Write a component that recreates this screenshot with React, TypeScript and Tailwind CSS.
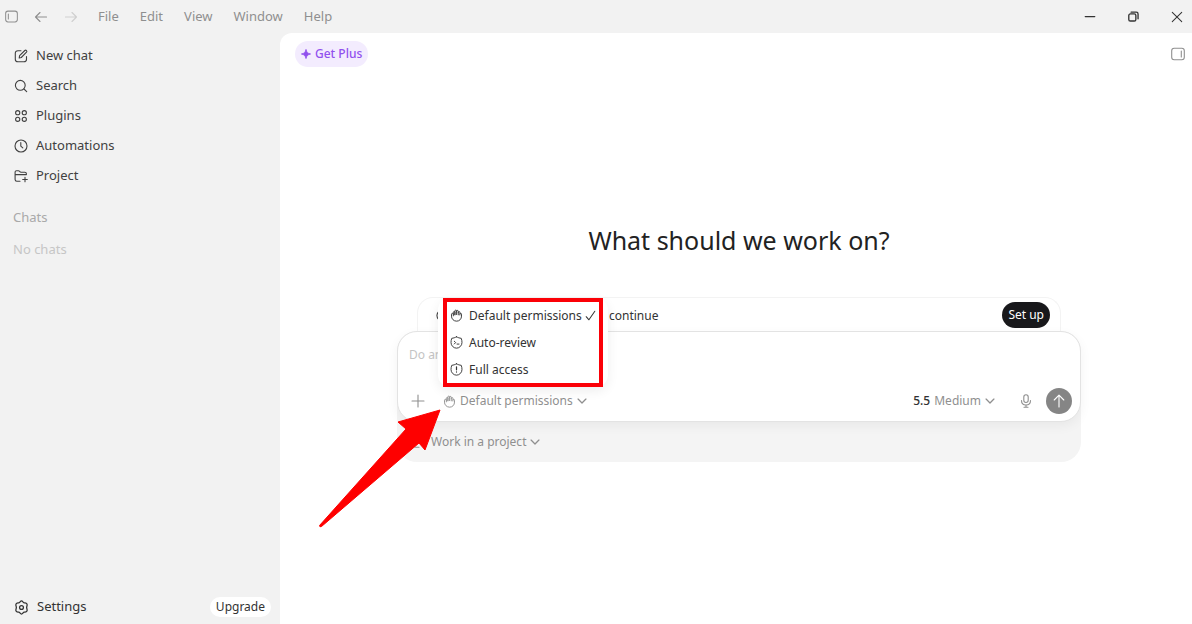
import type { ReactNode } from "react";

interface IconProps {
    size?: number;
    stroke?: number;
    className?: string;
    children?: ReactNode;
}

const Icon = ({ size = 14, stroke = 1.1, className = "", children }: IconProps) => (
    <svg width={size} height={size} viewBox="0 0 14 14" fill="none" stroke="currentColor" strokeWidth={stroke} strokeLinecap="round" strokeLinejoin="round" className={`shrink-0 ${className}`} aria-hidden="true">
        {children}
    </svg>
);

const HandIcon = () => (
    <Icon size={13} stroke={1}>
        <path d="M3.6 7.4V3.500c0-1 1.700-1 1.700 0v2.900M5.300 6V2c0-1.100 1.800-1.100 1.800 0v4M7.100 2.300c0-1.100 1.800-1.100 1.800 0v4M8.900 3.500c0-1 1.800-1 1.800 0v3" />
        <path d="M10.700 5.300c.2-1 1.700-.9 1.700.3v2c0 3.300-2.300 5.500-5.300 5.500-3.200 0-5.500-2.500-5.500-5.400V5.600c0-1.200 2-1.200 2 0" />
    </Icon>
);

const ReviewIcon = () => (
    <Icon size={13} stroke={1}>
        <path d="M7 .9c1.800 1 3.300 1.300 5.100 1.600.6 1.500.8 3.200.8 4.600 0 3.200-2.700 6-5.900 6s-5.900-2.800-5.900-6c0-1.400.2-3.100.8-4.600C3.700 2.200 5.200 1.900 7 .9Z" />
        <path d="m4.600 5.600 1.500 1.500-1.500 1.500M7.600 8.700h2.100" />
    </Icon>
);

const AccessIcon = () => (
    <Icon size={13} stroke={1}>
        <path d="M7 .9c1.800 1 3.300 1.300 5.100 1.600.6 1.500.8 3.200.8 4.600 0 3.200-2.700 6-5.900 6s-5.900-2.800-5.900-6c0-1.400.2-3.100.8-4.600C3.700 2.200 5.200 1.900 7 .9Z" />
        <path d="M7 4.100v3.300M7 9.600v.2" strokeWidth="1.300" />
    </Icon>
);

const ChevronIcon = () => (
    <Icon size={10} stroke={1.8}>
        <path d="m1.500 4.300 5.500 5.500 5.500-5.500" />
    </Icon>
);

const FolderIcon = () => (
    <Icon>
        <path d="M6 12.200H2.800c-1 0-1.700-.7-1.700-1.700V3.200c0-.9.6-1.400 1.400-1.400h1.900c.8 0 1 .3 1.400.8.3.4.7.6 1.300.6h3.700c1 0 1.600.6 1.600 1.500v.9H1.200M11 8.200v4.600M8.700 10.500h4.600" />
    </Icon>
);

const navItems = [
    {
        label: "New chat",
        icon: (
            <Icon>
                <path d="M7 1.700H4C2.400 1.700 1.300 2.700 1.300 4.300v5.900c0 1.600 1 2.600 2.600 2.600h6c1.600 0 2.600-1 2.600-2.600V7.500" />
                <path d="m5.200 9 .4-2.300 5.200-5.200c1.200-1 2.700.5 1.700 1.700L7.300 8.500 5.200 9Z" />
            </Icon>
        ),
    },
    {
        label: "Search",
        icon: (
            <Icon>
                <circle cx="6.300" cy="6.300" r="4.900" />
                <path d="m10 10 2.700 2.700" />
            </Icon>
        ),
    },
    {
        label: "Plugins",
        icon: (
            <Icon>
                <circle cx="3.700" cy="3.700" r="2.100" />
                <circle cx="10.300" cy="3.700" r="2.100" />
                <circle cx="3.700" cy="10.300" r="2.100" />
                <circle cx="10.300" cy="10.300" r="2.100" />
            </Icon>
        ),
    },
    {
        label: "Automations",
        icon: (
            <Icon>
                <circle cx="7" cy="7" r="6" />
                <path d="M6.800 3.600v3.500l2 1.800" />
            </Icon>
        ),
    },
    { label: "Project", icon: <FolderIcon /> },
];

const permissions = [
    { label: "Default permissions", icon: <HandIcon />, checked: true },
    { label: "Auto-review", icon: <ReviewIcon />, checked: false },
    { label: "Full access", icon: <AccessIcon />, checked: false },
];

const TitleBar = () => (
    <header className="flex h-[33px] shrink-0 items-center justify-between pl-[5px] pr-[9px] text-[#8f8f8f]">
        <div className="flex items-center">
            <button aria-label="Toggle sidebar">
                <Icon size={13}>
                    <rect x="0.700" y="1.200" width="12.600" height="11.600" rx="2.500" />
                    <path d="M3.600 4.300v5.400" />
                </Icon>
            </button>
            <button aria-label="Back" className="ml-4">
                <Icon>
                    <path d="M12.500 7H1.500M6 2.500 1.500 7 6 11.500" />
                </Icon>
            </button>
            <button aria-label="Forward" className="ml-4 text-[#cfcfcf]">
                <Icon>
                    <path d="M1.500 7h11M8 2.500 12.500 7 8 11.500" />
                </Icon>
            </button>
            <nav className="ml-5 flex gap-[21px] text-[13px]">
                <button>File</button>
                <button>Edit</button>
                <button>View</button>
                <button>Window</button>
                <button>Help</button>
            </nav>
        </div>
        <div className="flex items-center gap-8 text-[#333]">
            <button aria-label="Minimize">
                <Icon size={12} stroke={1.6}>
                    <path d="M1.500 6.500h11" />
                </Icon>
            </button>
            <button aria-label="Restore">
                <Icon size={11} stroke={1.7}>
                    <rect x="1" y="3.700" width="9" height="9" rx="2" />
                    <path d="M4 1.500h6.500c1.500 0 2.300.9 2.300 2.300V10" />
                </Icon>
            </button>
            <button aria-label="Close">
                <Icon size={12} stroke={1.200}>
                    <path d="m1.500 1.500 11 11M12.500 1.500l-11 11" />
                </Icon>
            </button>
        </div>
    </header>
);

const Sidebar = () => (
    <aside className="flex w-[280px] shrink-0 flex-col justify-between text-[13px] text-[#414141]">
        <div>
            <nav className="flex flex-col pt-2">
                {navItems.map((item) => (
                    <button key={item.label} className="flex h-[30px] items-center gap-2 pl-3.5 text-left">
                        {item.icon}
                        {item.label}
                    </button>
                ))}
            </nav>
            <h2 className="mt-4 pl-[13px] leading-5 text-[#a9a9a9]">Chats</h2>
            <p className="mt-3 pl-[13px] leading-5 text-[#c6c6c6]">No chats</p>
        </div>
        <div className="flex items-center justify-between pb-[7px] pl-3.5 pr-[9px]">
            <button className="flex items-center gap-2 text-[#333]">
                <Icon size={15} stroke={1.200}>
                    <path d="M9.400 2.600C8.400 2.400 8.100.9 7 .9S5.600 2.400 4.600 2.600C3.600 2.900 2.500 2.600 1.900 3.800 1.300 5 2.200 5.800 2.200 7c0 1.200-.9 2-.3 3.200.6 1.200 1.700.9 2.700 1.200 1 .2 1.300 1.700 2.400 1.700s1.400-1.500 2.400-1.700c1-.3 2.100 0 2.700-1.200.6-1.200-.3-2-.3-3.200 0-1.200.9-2 .3-3.200-.6-1.200-1.700-.9-2.700-1.200Z" />
                    <circle cx="7" cy="7" r="1.800" />
                </Icon>
                Settings
            </button>
            <button className="rounded-full bg-white px-1.5 text-[12px] leading-5 text-[#333]">Upgrade</button>
        </div>
    </aside>
);

const PermissionMenu = () => (
    <div className="absolute -top-[33px] left-[41px] z-10 rounded-xl bg-white px-[5px] shadow-[0_4px_12px_rgba(0,0,0,0.07)]">
        <ul role="menu" className="w-40 border-4 border-[#fb0007]">
            {permissions.map((item) => (
                <li key={item.label} role="none">
                    <button role="menuitemradio" aria-checked={item.checked} className="flex h-[27px] w-full items-center px-[3px] text-left text-[#333]">
                        {item.icon}
                        <span className="ml-1.5 flex-1 whitespace-nowrap">{item.label}</span>
                        {item.checked && (
                            <Icon size={11} stroke={1.300}>
                                <path d="m1.500 8.500 3.500 4L12.500 1.500" />
                            </Icon>
                        )}
                    </button>
                </li>
            ))}
        </ul>
    </div>
);

const Composer = () => (
    <div className="w-full max-w-[684px] text-[12px]">
        <div className="mx-5 flex h-[34px] items-center justify-between rounded-t-2xl border border-b-0 border-[#f3f3f3] pl-[18px] pr-2.5 text-[#333]">
            <div className="flex items-center pt-0.5">
                <Icon size={13}>
                    <circle cx="7" cy="7" r="6" />
                </Icon>
                <span className="ml-40">continue</span>
            </div>
            <button className="h-[26px] rounded-full bg-[#18181b] px-1.5 text-white">Set up</button>
        </div>
        <div className="relative rounded-[20px] bg-[#f4f4f4]">
            <form className="rounded-[20px] border border-[#e3e3e3] bg-white px-2 pb-[7px] pt-3 shadow-[0_4px_12px_rgba(0,0,0,0.05)]" onSubmit={(e) => e.preventDefault()}>
                <input type="text" aria-label="Message" placeholder="Do anything" className="block h-5 w-full px-[3px] outline-none placeholder:text-[#c4c4c4]" />
                <div className="mt-6 flex items-center justify-between pl-[5px] text-[#8f8f8f]">
                    <div className="flex items-center gap-[18px]">
                        <button type="button" aria-label="Add">
                            <Icon>
                                <path d="M7 1v12M1 7h12" />
                            </Icon>
                        </button>
                        <button type="button" className="flex items-center gap-1">
                            <HandIcon />
                            Default permissions
                            <ChevronIcon />
                        </button>
                    </div>
                    <div className="flex items-center">
                        <button type="button" className="flex items-center gap-1">
                            <span className="font-medium text-[#333]">5.5</span>
                            Medium
                            <ChevronIcon />
                        </button>
                        <button type="button" aria-label="Dictate" className="ml-6">
                            <Icon>
                                <rect x="4.800" y="0.800" width="4.400" height="7.700" rx="2.200" />
                                <path d="M2.500 6.500c0 2.700 1.900 4.500 4.500 4.500s4.500-1.800 4.500-4.500M7 11v2.200M5 13.200h4" />
                            </Icon>
                        </button>
                        <button type="submit" aria-label="Send" className="ml-[13px] flex size-[26px] items-center justify-center rounded-full bg-[#858585] text-white">
                            <Icon>
                                <path d="M7 13V1.200M2.200 6 7 1.200 11.800 6" />
                            </Icon>
                        </button>
                    </div>
                </div>
            </form>
            <button className="flex h-10 items-center gap-1 pl-4 text-[#8f8f8f]">
                <FolderIcon />
                Work in a project
                <ChevronIcon />
            </button>
            <PermissionMenu />
            <svg width="122" height="120" viewBox="0 0 122 120" className="absolute -left-[78px] top-[78px] z-20" aria-hidden="true">
                <path d="M121 1 79 13l8 7L.500 116.500q0 2 2 1L100 34l6 7Z" fill="#fe0000" stroke="#fe0000" strokeWidth="1" strokeLinejoin="round" />
            </svg>
        </div>
    </div>
);

const App = () => {
    return (
        <div className="flex min-h-screen flex-col bg-[#f2f2f2] font-['Noto_Sans',sans-serif]">
            <TitleBar />
            <div className="flex flex-1">
                <Sidebar />
                <main className="flex flex-1 flex-col rounded-tl-xl bg-white">
                    <div className="flex items-center justify-between pl-[15px] pr-[7px] pt-2">
                        <button className="flex h-[26px] items-center gap-1 rounded-full bg-[#f3ecfe] px-1.5 text-[12px] font-medium text-[#9150ee]">
                            <svg width="10" height="10" viewBox="0 0 12 12" fill="currentColor" aria-hidden="true">
                                <path d="M6 .5C6.800 4 8 5.200 11.500 6 8 6.800 6.800 8 6 11.500 5.200 8 4 6.800.5 6 4 5.200 5.200 4 6 .5Z" stroke="currentColor" strokeWidth="1" strokeLinejoin="round" />
                            </svg>
                            Get Plus
                        </button>
                        <button aria-label="Toggle panel" className="text-[#8f8f8f]">
                            <Icon>
                                <rect x="0.700" y="1.200" width="12.600" height="11.600" rx="2.500" />
                                <path d="M10.300 4v6" />
                            </Icon>
                        </button>
                    </div>
                    <div className="flex flex-1 flex-col items-center pl-1.5 pt-[153px]">
                        <h1 className="text-[25px] leading-10 text-[#222]">What should we work on?</h1>
                        <div className="mt-[37px] flex w-full justify-center">
                            <Composer />
                        </div>
                    </div>
                </main>
            </div>
        </div>
    );
};

export default App;
